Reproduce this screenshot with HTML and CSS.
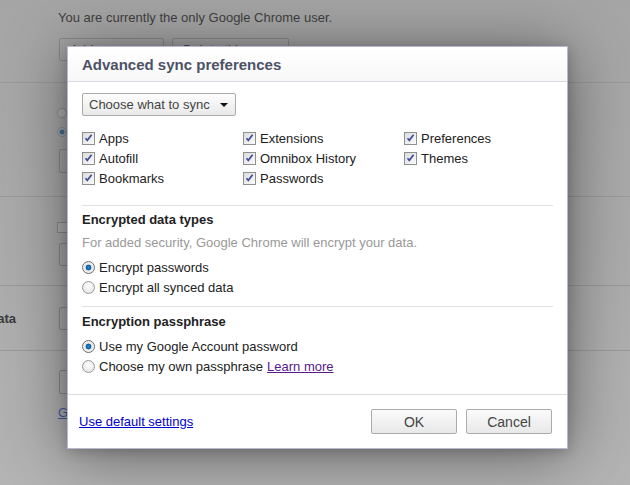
FILE: index.html
```html
<!DOCTYPE html>
<html>
<head>
<meta charset="utf-8">
<link rel="stylesheet" href="styles.css">
</head>
<body>
<div class="page">
  <section class="sec sec-users">
    <div class="sec-title"></div>
    <div class="sec-body">
      <p class="bg-text">You are currently the only Google Chrome user.</p>
      <div class="bg-btns">
        <span class="bg-btn w105">Add new user...</span>
        <span class="bg-btn w117">Delete this user</span>
      </div>
    </div>
  </section>
  <section class="sec sec-two">
    <div class="sec-title"></div>
    <div class="sec-body">
      <span class="bg-radio"></span>
      <span class="bg-radio on"></span>
      <span class="bg-btn w105"></span>
    </div>
  </section>
  <section class="sec sec-three">
    <div class="sec-title"></div>
    <div class="sec-body">
      <span class="bg-check"></span>
      <span class="bg-btn w105"></span>
    </div>
  </section>
  <section class="sec sec-four">
    <div class="sec-title"><span>Sync data</span></div>
    <div class="sec-body">
      <span class="bg-btn w105"></span>
    </div>
  </section>
  <section class="sec sec-five">
    <div class="sec-title"></div>
    <div class="sec-body">
      <span class="bg-btn w105"></span>
      <a class="bg-link">Go</a>
    </div>
  </section>
</div>

<div class="overlay"></div>

<div class="dialog">
  <div class="dlg-head">Advanced sync preferences</div>
  <div class="dlg-body">
    <div class="select">Choose what to sync<span class="caret"></span></div>
    <div class="types">
      <label class="opt"><span class="cb"></span>Apps</label>
      <label class="opt"><span class="cb"></span>Extensions</label>
      <label class="opt"><span class="cb"></span>Preferences</label>
      <label class="opt"><span class="cb"></span>Autofill</label>
      <label class="opt"><span class="cb"></span>Omnibox History</label>
      <label class="opt"><span class="cb"></span>Themes</label>
      <label class="opt"><span class="cb"></span>Bookmarks</label>
      <label class="opt"><span class="cb"></span>Passwords</label>
    </div>
    <div class="group g1">
      <h3 class="gh">Encrypted data types</h3>
      <p class="desc">For added security, Google Chrome will encrypt your data.</p>
      <label class="opt"><span class="rb on"></span>Encrypt passwords</label>
      <label class="opt"><span class="rb"></span>Encrypt all synced data</label>
    </div>
    <div class="group g2">
      <h3 class="gh">Encryption passphrase</h3>
      <label class="opt r1"><span class="rb on"></span>Use my Google Account password</label>
      <label class="opt"><span class="rb"></span>Choose my own passphrase <a class="learn">Learn more</a></label>
    </div>
  </div>
  <div class="dlg-foot">
    <a class="deflink">Use default settings</a>
    <div class="btns">
      <span class="btn">OK</span>
      <span class="btn">Cancel</span>
    </div>
  </div>
</div>
</body>
</html>
```
FILE: styles.css
```css
html, body {
  margin: 0;
  padding: 0;
  width: 630px;
  height: 485px;
  overflow: hidden;
}
body {
  font-family: "Liberation Sans", Arial, sans-serif;
  font-size: 13px;
  background: linear-gradient(180deg, #a7a7a7 0%, #adadad 50%, #b7b7b7 100%);
  position: relative;
}

/* background settings page */
.page { width: 630px; }
.sec {
  display: grid;
  grid-template-columns: 57px 1fr;
  border-bottom: 1px solid #9b9b9b;
  box-sizing: border-box;
}
.sec-title {
  display: flex;
  justify-content: flex-end;
  padding-right: 41px;
  white-space: nowrap;
  font-weight: bold;
  color: #333;
  overflow: visible;
}
.sec-body { display: flex; flex-direction: column; align-items: flex-start; }
.sec-users { height: 83px; }
.sec-two { height: 114px; }
.sec-three { height: 89px; }
.sec-four { height: 65px; }
.sec-five { height: 135px; border-bottom: 0; }

.bg-text { margin: 10px 0 0 1px; color: #383838; line-height: 16px; }
.bg-btns { display: flex; gap: 8px; margin: 12px 0 0 2px; }
.bg-btn {
  display: block;
  height: 22px;
  border: 1px solid #8a8a8a;
  border-radius: 2px;
  box-sizing: border-box;
  color: #444;
  padding: 4px 10px;
  line-height: 14px;
  white-space: nowrap;
  margin-left: 2px;
}
.w105 { width: 105px; }
.w117 { width: 117px; }
.sec-users .bg-btn { height: 23px; margin-left: 0; }
.bg-radio {
  width: 10px; height: 10px; border-radius: 50%;
  border: 1px solid #8f8f8f; box-sizing: border-box;
  background: #b5b5b5;
  display: block;
}
.sec-two .bg-radio:first-child { margin-top: 25px; }
.sec-two .bg-radio.on { margin-top: 9px; background: radial-gradient(circle, #3d6f93 0 2px, #a9b3ba 3px); }
.sec-two .bg-btn { margin-top: 12px; height: 24px; }
.bg-check {
  width: 11px; height: 11px; border: 1px solid #8a8a8a; box-sizing: border-box;
  display: block; margin-top: 25px; background: #b3b3b3;
}
.sec-three .bg-btn { margin-top: 10px; height: 23px; }
.sec-four .sec-title { padding-top: 25px; line-height: 16px; }
.sec-four .bg-btn { margin-top: 21px; height: 23px; }
.sec-five .bg-btn { margin-top: 19px; height: 24px; }
.bg-link { margin: 11px 0 0 1px; color: #3f58a4; text-decoration: underline; line-height: 16px; }

.overlay {
  position: absolute;
  inset: 0;
  background: rgba(150, 150, 150, 0.08);
}

/* dialog */
.dialog {
  position: absolute;
  left: 67px;
  top: 46px;
  width: 501px;
  height: 403px;
  box-sizing: border-box;
  background: #fff;
  border: 1px solid #b7bace;
  box-shadow: 0 6px 60px rgba(0, 0, 0, 0.45), 0 2px 12px rgba(0, 0, 0, 0.2);
  display: flex;
  flex-direction: column;
  color: #222;
}
.dlg-head {
  height: 35px;
  box-sizing: border-box;
  border-bottom: 1px solid #d6d8e2;
  background: linear-gradient(180deg, #fff, #f8f8f8);
  padding: 9px 0 0 14px;
  font-size: 15px;
  font-weight: bold;
  color: #4d5165;
  line-height: 17px;
}
.dlg-body {
  padding: 11px 14px 0 14px;
  height: 313px;
  box-sizing: border-box;
  border-bottom: 1px solid #dadada;
}
.select {
  width: 154px;
  height: 23px;
  box-sizing: border-box;
  border: 1px solid #aaa;
  border-radius: 2px;
  background: linear-gradient(180deg, #fdfdfd, #e9e9e9);
  color: #444;
  padding: 0 0 0 6px;
  line-height: 15px;
  display: flex;
  align-items: center;
  position: relative;
}
.caret {
  position: absolute;
  right: 7px;
  top: 9px;
  width: 0; height: 0;
  border-left: 4px solid transparent;
  border-right: 4px solid transparent;
  border-top: 4px solid #111;
}
.types {
  display: grid;
  grid-template-columns: 161px 161px 1fr;
  grid-auto-rows: 20px;
  margin-top: 12px;
  padding-bottom: 17px;
  border-bottom: 1px solid #e0e0e0;
}
.opt {
  display: flex;
  align-items: center;
  height: 20px;
  color: #222;
  white-space: nowrap;
}
.cb {
  width: 13px; height: 13px;
  box-sizing: border-box;
  border: 1px solid #8e8f8f;
  background:
    url("data:image/svg+xml;utf8,<svg xmlns='http://www.w3.org/2000/svg' width='11' height='11' viewBox='0 0 11 11'><path d='M2.5 5.2 L4.3 7.3 L8.6 1.8' fill='none' stroke='%233b4f9c' stroke-width='1.7'/></svg>") center/11px 11px no-repeat,
    linear-gradient(135deg, #dcdcdc, #fbfbfb);
  margin-right: 4px;
  flex: none;
}
.group { padding-top: 6px; }
.gh {
  margin: 0;
  font-size: 13px;
  font-weight: bold;
  line-height: 16px;
  color: #222;
}
.desc {
  margin: 7px 0 0;
  color: #999;
  line-height: 16px;
}
.desc + .opt { margin-top: 6px; }
.g1 { border-bottom: 1px solid #e0e0e0; padding-bottom: 9px; }
.g2 { padding-top: 7px; }
.r1 { margin-top: 6px; }
.rb {
  width: 13px; height: 13px;
  border-radius: 50%;
  box-sizing: border-box;
  border: 1px solid #9a9a9a;
  background: radial-gradient(circle at 50% 40%, #fff, #dedede);
  margin-right: 4px;
  flex: none;
}
.rb.on {
  background: radial-gradient(circle at 50% 50%, #1f8fd6 0, #0b5aa0 2.6px, #e6e6e6 3.2px, #f6f6f6 6px);
  border-color: #6b6b6b;
}
.learn {
  color: #551a8b;
  text-decoration: underline;
  margin-left: 4px;
}
.dlg-foot {
  flex: 1;
  display: flex;
  align-items: center;
  justify-content: space-between;
  padding: 0 15px 0 11px;
}
.deflink {
  color: #0000cc;
  text-decoration: underline;
  line-height: 16px;
}
.btns { display: flex; gap: 9px; }
.btn {
  width: 86px;
  height: 25px;
  box-sizing: border-box;
  border: 1px solid #acacac;
  border-radius: 2px;
  background: linear-gradient(180deg, #fbfbfb, #e8e8e8);
  color: #444;
  display: flex;
  align-items: center;
  justify-content: center;
  font-size: 14px;
}
```
